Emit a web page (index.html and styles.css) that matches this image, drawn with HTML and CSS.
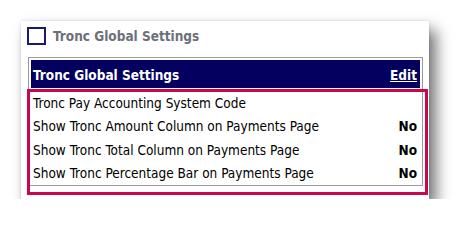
FILE: index.html
```html
<!DOCTYPE html>
<html lang="en">
<head>
    <meta charset="UTF-8">
    <meta name="viewport" content="width=device-width, initial-scale=1.0">
    <title>Tronc Global Settings</title>
    <link rel="stylesheet" href="styles.css">
</head>
<body>
    <div class="settings-card">
        <div class="card-title">
            <span class="check-box"></span>
            <span class="title-text">Tronc Global Settings</span>
        </div>
        <div class="settings-table">
            <div class="table-header">
                <span>Tronc Global Settings</span>
                <a href="#" class="edit-link">Edit</a>
            </div>
            <div class="table-rows">
                <div class="setting-row"><span>Tronc Pay Accounting System Code</span><span class="setting-value"></span></div>
                <div class="setting-row"><span>Show Tronc Amount Column on Payments Page</span><span class="setting-value">No</span></div>
                <div class="setting-row"><span>Show Tronc Total Column on Payments Page</span><span class="setting-value">No</span></div>
                <div class="setting-row"><span>Show Tronc Percentage Bar on Payments Page</span><span class="setting-value">No</span></div>
            </div>
        </div>
        <div class="highlight-box"></div>
    </div>
</body>
</html>
```

FILE: styles.css
```css
body {
    margin: 0;
    background-color: #ffffff;
    font-family: "DejaVu Sans Condensed", "DejaVu Sans", "Liberation Sans", sans-serif;
    font-size: 13.5px;
    color: #000000;
}
.settings-card {
    position: relative;
    width: 408px;
    height: 178px;
    margin: 21px 0 0 21px;
    background-color: #ffffff;
    box-shadow: 0 0 3px rgba(0,0,0,0.12), 7px 9px 14px rgba(0,0,0,0.55);
}
.card-title {
    display: flex;
    align-items: center;
    gap: 7px;
    padding: 5px 0 0 6px;
    height: 19px;
}
.check-box {
    width: 15px;
    height: 14px;
    border: 2px solid #1c1a6a;
}
.title-text {
    font-weight: bold;
    font-size: 13.5px;
    color: #6c7079;
}
.settings-table {
    margin: 12px 0 0 7px;
    width: 389px;
    padding: 2px 2px 0 2px;
    border: 1px solid #9a9a9a;
}
.table-header {
    display: flex;
    justify-content: space-between;
    align-items: center;
    height: 28px;
    padding: 1px 3px 0 2px;
    box-sizing: border-box;
    background-color: #03005f;
    color: #ffffff;
    font-weight: bold;
    font-size: 13.5px;
}
.edit-link {
    color: #ffffff;
}
.table-rows {
    padding-top: 3px;
}
.setting-row {
    display: flex;
    justify-content: space-between;
    align-items: center;
    height: 23.5px;
    padding: 0 3px 0 2px;
}
.setting-value {
    font-weight: bold;
}
.highlight-box {
    position: absolute;
    left: 6px;
    top: 68px;
    width: 395px;
    height: 100px;
    border: 3px solid #c8074f;
}
```
